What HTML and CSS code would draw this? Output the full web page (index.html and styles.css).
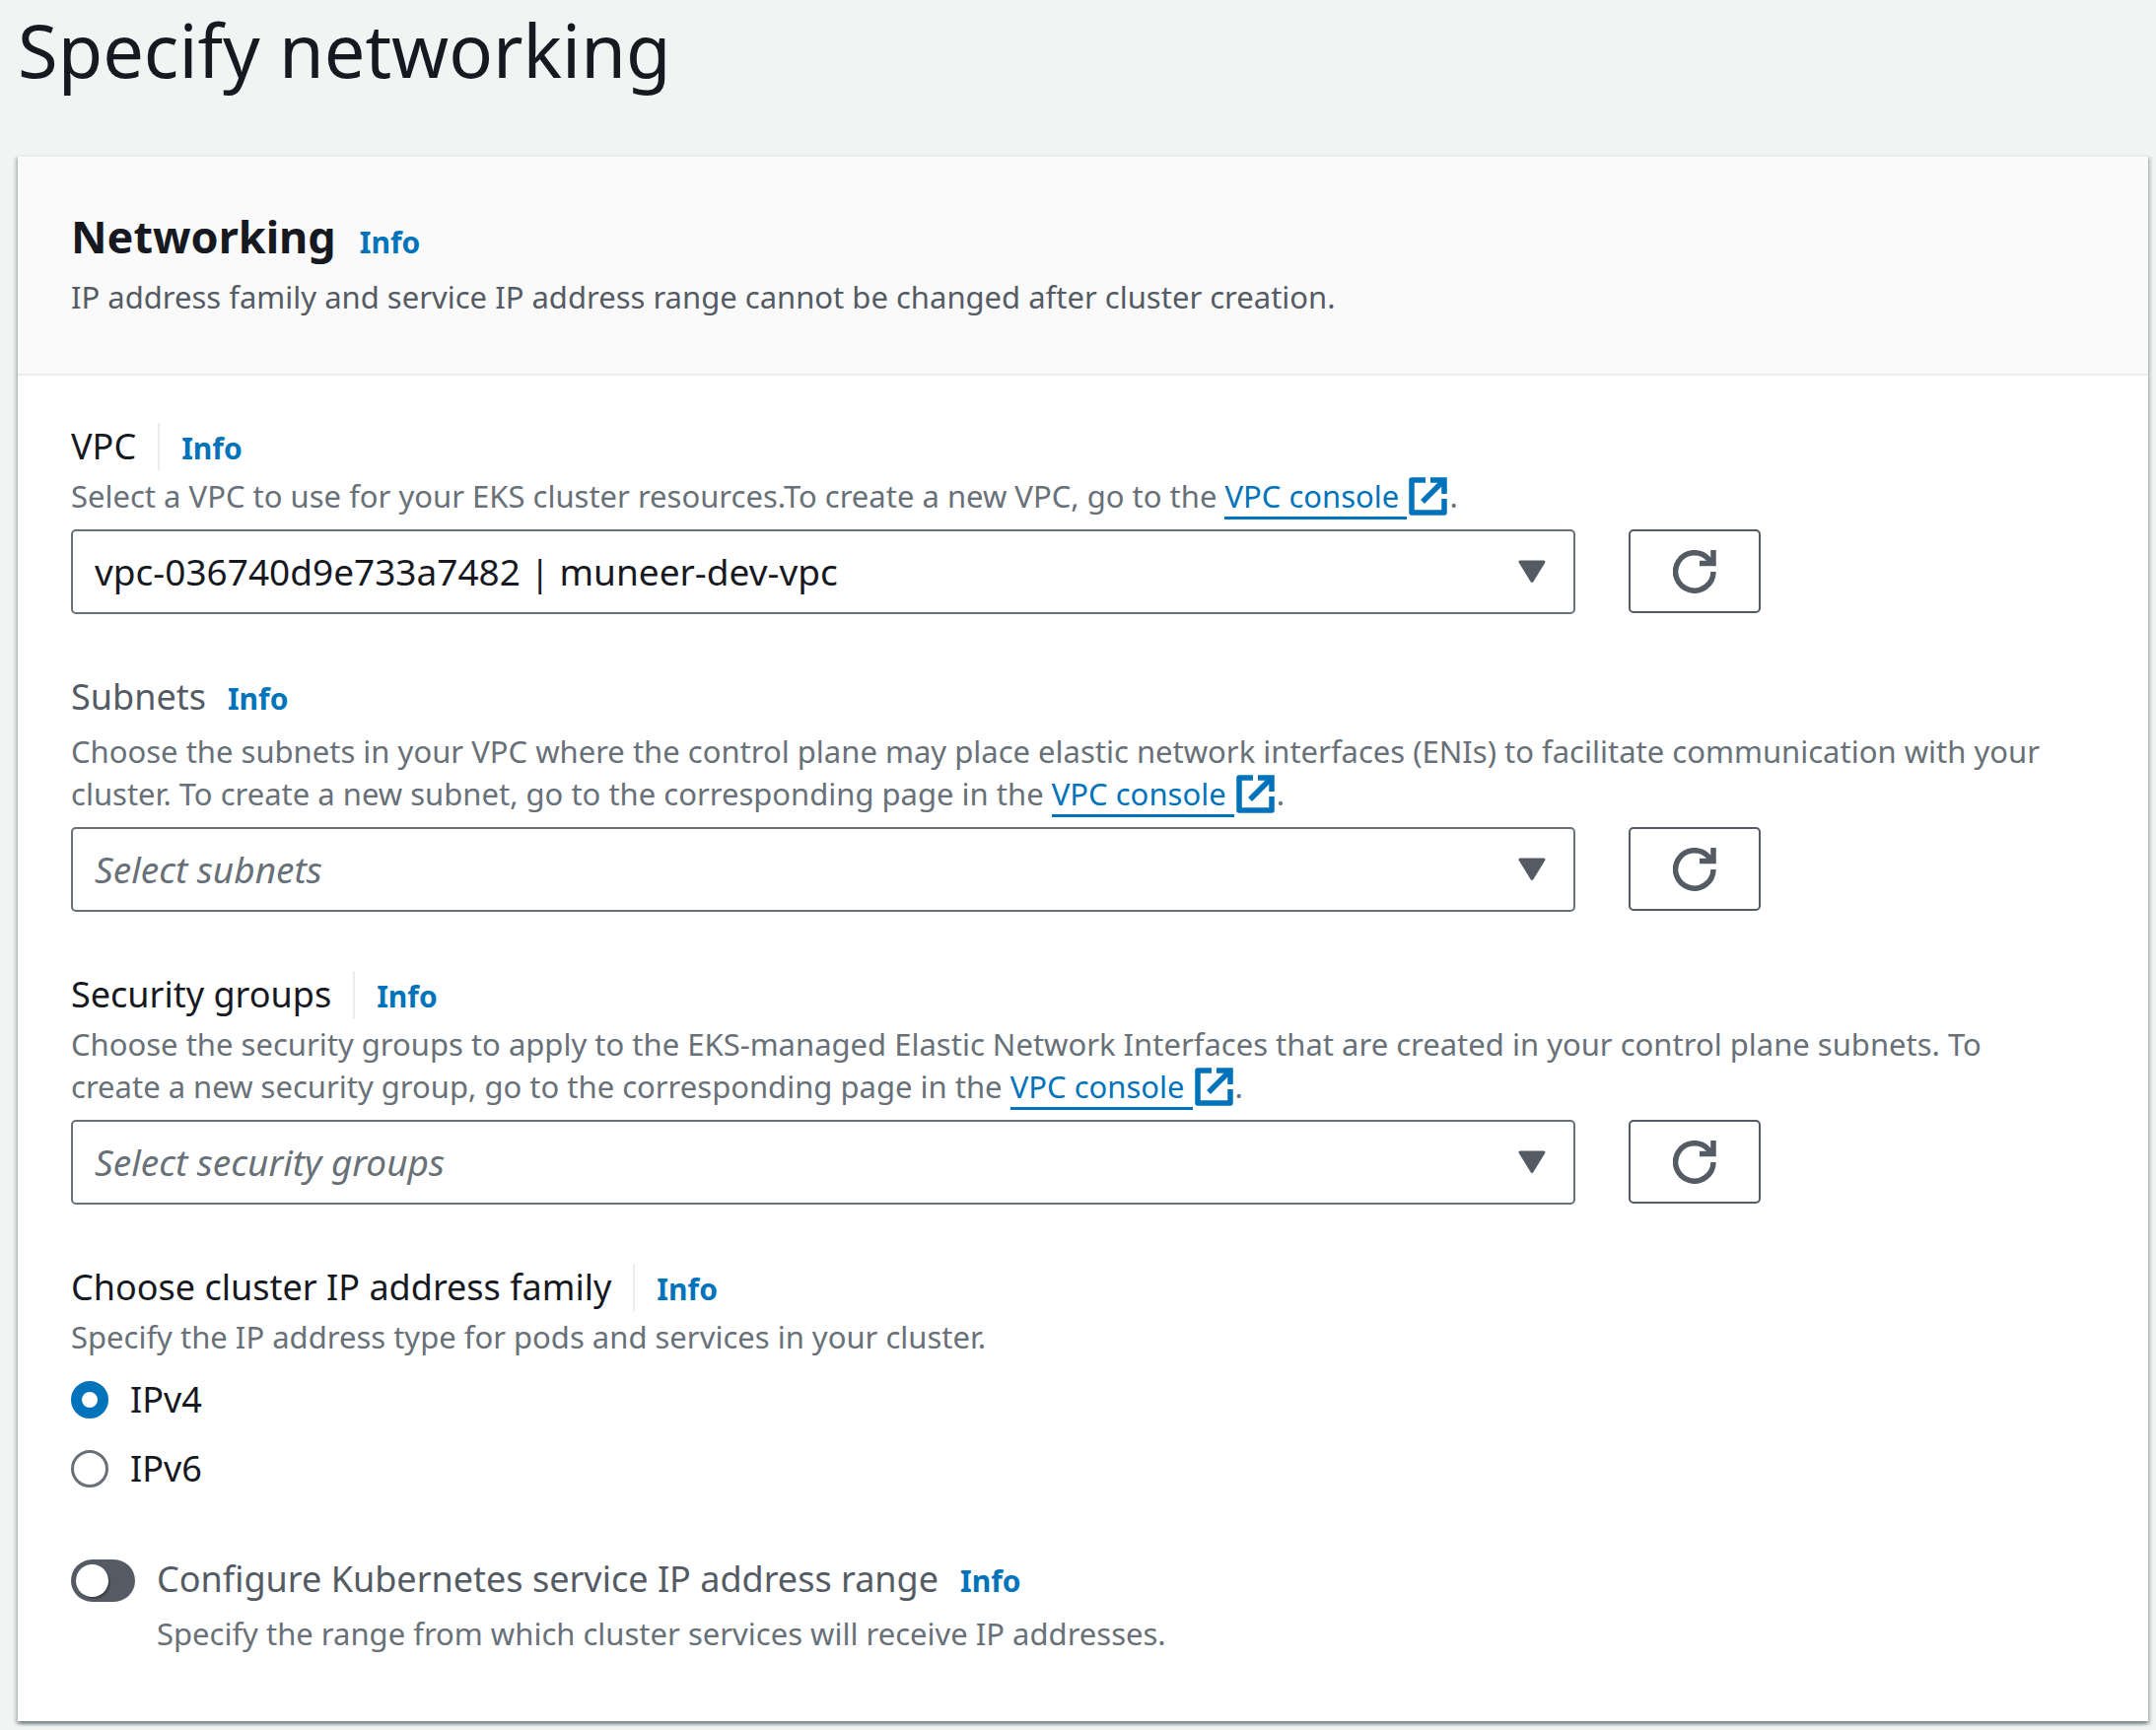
FILE: index.html
```html
<!DOCTYPE html>
<html lang="en">
<head>
<meta charset="utf-8">
<meta name="viewport" content="width=device-width, initial-scale=1">
<title>Specify networking</title>
<link rel="stylesheet" href="styles.css">
</head>
<body>
<svg class="sprite" aria-hidden="true">
  <symbol id="icon-external" viewBox="0 0 39 39">
    <path d="M17 3H3v33h33V22" fill="none" stroke="currentColor" stroke-width="5.500" stroke-linejoin="round"/>
    <path d="M14 25 35 4" fill="none" stroke="currentColor" stroke-width="5.500"/>
    <path d="M22 3h14v14" fill="none" stroke="currentColor" stroke-width="5.500"/>
  </symbol>
  <symbol id="icon-refresh" viewBox="0 0 44 44">
    <path d="M41 22A19.200 19.200 0 1 1 36 9L40 13" fill="none" stroke="currentColor" stroke-width="5.500"/>
    <path d="M41 0v13.500H27" fill="none" stroke="currentColor" stroke-width="5.500"/>
  </symbol>
  <symbol id="icon-caret" viewBox="0 0 28 24">
    <path d="M2 2h24L14 21.500z" fill="currentColor" stroke="currentColor" stroke-width="3" stroke-linejoin="round"/>
  </symbol>
</svg>
<main class="page">
  <h1 class="page-title">Specify networking</h1>
  <form class="card">
    <header class="card-header">
      <div class="heading-row">
        <h2 class="card-title">Networking</h2>
        <a class="info" href="#networking-info">Info</a>
      </div>
      <p class="card-description">IP address family and service IP address range cannot be changed after cluster creation.</p>
    </header>
    <div class="card-body">
      <section class="field">
        <div class="label-row">
          <label class="label divided" for="vpc">VPC</label>
          <a class="info" href="#vpc-info">Info</a>
        </div>
        <p class="hint" id="vpc-hint">Select a VPC to use for your EKS cluster resources.To create a new VPC, go to the <a class="external" href="#vpc-console"><span class="external-text">VPC console&nbsp;</span><svg class="external-icon" aria-hidden="true"><use href="#icon-external"/></svg></a>.</p>
        <div class="control-row">
          <div class="select-box">
            <select class="select" id="vpc" aria-describedby="vpc-hint">
              <option>vpc-036740d9e733a7482 | muneer-dev-vpc</option>
            </select>
            <svg class="caret" aria-hidden="true"><use href="#icon-caret"/></svg>
          </div>
          <button class="refresh" type="button" aria-label="Refresh VPCs"><svg class="refresh-icon" aria-hidden="true"><use href="#icon-refresh"/></svg></button>
        </div>
      </section>

      <section class="field">
        <div class="label-row spaced">
          <label class="label muted" for="subnets">Subnets</label>
          <a class="info" href="#subnets-info">Info</a>
        </div>
        <p class="hint" id="subnets-hint">Choose the subnets in your VPC where the control plane may place elastic network interfaces (ENIs) to facilitate communication with your cluster. To create a new subnet, go to the corresponding page in the <a class="external" href="#vpc-console"><span class="external-text">VPC console&nbsp;</span><svg class="external-icon" aria-hidden="true"><use href="#icon-external"/></svg></a>.</p>
        <div class="control-row">
          <div class="select-box">
            <select class="select placeholder" id="subnets" aria-describedby="subnets-hint">
              <option>Select subnets</option>
            </select>
            <svg class="caret" aria-hidden="true"><use href="#icon-caret"/></svg>
          </div>
          <button class="refresh" type="button" aria-label="Refresh subnets"><svg class="refresh-icon" aria-hidden="true"><use href="#icon-refresh"/></svg></button>
        </div>
      </section>

      <section class="field">
        <div class="label-row">
          <label class="label divided" for="groups">Security groups</label>
          <a class="info" href="#groups-info">Info</a>
        </div>
        <p class="hint" id="groups-hint">Choose the security groups to apply to the EKS-managed Elastic Network Interfaces that are created in your control plane subnets. To create a new security group, go to the corresponding page in the <a class="external" href="#vpc-console"><span class="external-text">VPC console&nbsp;</span><svg class="external-icon" aria-hidden="true"><use href="#icon-external"/></svg></a>.</p>
        <div class="control-row">
          <div class="select-box">
            <select class="select placeholder" id="groups" aria-describedby="groups-hint">
              <option>Select security groups</option>
            </select>
            <svg class="caret" aria-hidden="true"><use href="#icon-caret"/></svg>
          </div>
          <button class="refresh" type="button" aria-label="Refresh security groups"><svg class="refresh-icon" aria-hidden="true"><use href="#icon-refresh"/></svg></button>
        </div>
      </section>

      <section class="field" role="radiogroup" aria-labelledby="family-label">
        <div class="label-row">
          <span class="label divided" id="family-label">Choose cluster IP address family</span>
          <a class="info" href="#family-info">Info</a>
        </div>
        <p class="hint">Specify the IP address type for pods and services in your cluster.</p>
        <div class="radio-list">
          <label class="radio-row"><input class="radio" type="radio" name="family" checked>IPv4</label>
          <label class="radio-row"><input class="radio" type="radio" name="family">IPv6</label>
        </div>
      </section>

      <section class="field toggle-field">
        <input class="toggle" type="checkbox" role="switch" id="range" aria-describedby="range-hint">
        <div class="toggle-text">
          <div class="label-row spaced">
            <label class="label muted" for="range">Configure Kubernetes service IP address range</label>
            <a class="info" href="#range-info">Info</a>
          </div>
          <p class="hint" id="range-hint">Specify the range from which cluster services will receive IP addresses.</p>
        </div>
      </section>
    </div>
  </form>
</main>
</body>
</html>
```
FILE: styles.css
```css
* {
  box-sizing: border-box;
}

body {
  margin: 0;
  background: #f2f4f3;
  color: #16191f;
  font-family: "Noto Sans", "Open Sans", sans-serif;
  font-size: 36px;
  line-height: 48px;
}

h1, h2, p {
  margin: 0;
}

.sprite {
  display: none;
}

.page {
  padding: 0 8px 9px 18px;
}

.page-title {
  padding-bottom: 55px;
  font-size: 74px;
  font-weight: 400;
  line-height: 102px;
}

.card {
  border-top: 2px solid #eaeded;
  background: #fff;
  box-shadow:
    0 3px 3px rgba(0, 28, 36, 0.3),
    3px 3px 3px rgba(0, 28, 36, 0.15),
    -3px 3px 3px rgba(0, 28, 36, 0.15);
}

.card-header {
  display: grid;
  gap: 4px;
  padding: 48px 54px 54px;
  border-bottom: 2px solid #eaeded;
  background: #fafafa;
}

.heading-row {
  display: flex;
  align-items: baseline;
  gap: 24px;
}

.card-title {
  font-size: 45px;
  line-height: 66px;
}

.info {
  color: #0073bb;
  font-size: 30px;
  font-weight: 700;
  line-height: 40px;
  text-decoration: none;
}

.card-description {
  color: #545b64;
  font-size: 31px;
}

.card-body {
  display: flex;
  flex-direction: column;
  gap: 60px;
  padding: 48px 54px 67px;
}

.label-row {
  display: flex;
  align-items: baseline;
  padding-bottom: 5px;
}

.label-row.spaced {
  padding-bottom: 10px;
}

.label {
  margin-right: 22px;
}

.divided {
  padding-right: 22px;
  border-right: 2px solid #eaeded;
}

.muted {
  color: #545b64;
}

.hint {
  padding-right: 40px;
  color: #687078;
  font-size: 31px;
  line-height: 43px;
}

.external {
  color: #0073bb;
  text-decoration: none;
}

.external-text {
  border-bottom: 3px solid #0073bb;
}

.external-icon {
  width: 39px;
  height: 39px;
  margin: -8px 2px;
}

.control-row {
  display: flex;
  gap: 54px;
  padding-top: 12px;
}

.select-box {
  display: grid;
  flex: 0 1 1526px;
  align-items: center;
}

.select {
  grid-area: 1 / 1;
  width: 100%;
  height: 86px;
  padding: 0 80px 0 22px;
  border: 2px solid #687078;
  border-radius: 5px;
  appearance: none;
  background: #fff;
  color: #16191f;
  font: inherit;
  font-size: 37px;
}

.placeholder {
  color: #687078;
  font-style: italic;
}

.caret {
  grid-area: 1 / 1;
  justify-self: end;
  width: 28px;
  height: 24px;
  margin-right: 30px;
  color: #545b64;
  pointer-events: none;
}

.refresh {
  display: grid;
  place-items: center;
  width: 134px;
  height: 85px;
  padding: 0;
  border: 2px solid #545b64;
  border-radius: 5px;
  background: #fff;
  color: #545b64;
}

.refresh-icon {
  width: 44px;
  height: 44px;
}

.radio-list {
  display: grid;
  gap: 22px;
  padding-top: 18px;
}

.radio-row {
  display: flex;
  align-items: center;
  gap: 22px;
}

.radio {
  width: 38px;
  height: 38px;
  margin: 0;
  border: 3px solid #687078;
  border-radius: 50%;
  appearance: none;
  background: #fff;
}

.radio:checked {
  border: 11px solid #0073bb;
}

.toggle-field {
  display: flex;
  gap: 22px;
  padding-top: 4px;
}

.toggle {
  display: flex;
  flex: none;
  align-items: center;
  width: 65px;
  height: 43px;
  margin: 4px 0 0;
  padding: 5px;
  border-radius: 22px;
  appearance: none;
  background: #545b64;
}

.toggle::before {
  width: 33px;
  height: 33px;
  border-radius: 50%;
  background: #fff;
  box-shadow: 2px 2px 1px rgba(0, 0, 0, 0.25);
  content: "";
}

.toggle:checked {
  justify-content: flex-end;
  background: #0073bb;
}
```
